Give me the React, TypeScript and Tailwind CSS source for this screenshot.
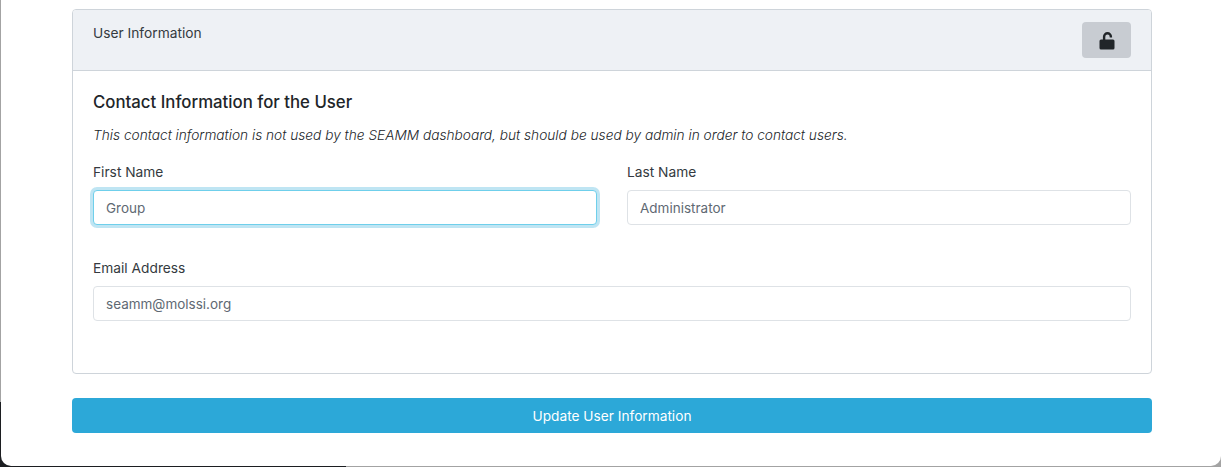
function Field({ label, value, focus, className }: { label: string; value: string; focus?: boolean; className?: string }) {
  return (
    <div className={className}>
      <label className="mb-[6px] block text-[13.75px] leading-[23px] text-[#343a40]">{label}</label>
      <input
        readOnly
        value={value}
        className={
          focus
            ? "block w-full h-[35px] rounded-[4px] border border-[#6fcfeb] bg-white px-3 text-[13.5px] leading-[21px] text-[#5f6973] outline-none shadow-[0_0_0_3px_rgba(44,168,216,0.3)]"
            : "block w-full h-[35px] rounded-[4px] border border-[#dee2e6] bg-white px-3 text-[13.5px] leading-[21px] text-[#5f6973] outline-none"
        }
      />
    </div>
  );
}

export default function App() {
  return (
    <div className="relative h-[467px] w-full overflow-hidden bg-[#a3a3a3] font-['Inter',sans-serif]">
      <div className="absolute bottom-0 left-0 h-[65px] w-[346px] bg-[#1c1e21]" />
      <div className="relative ml-px h-[466px] rounded-b-[10px] bg-white pl-[71px] pr-[69px] pt-[9px]">
        <div className="h-[365px] rounded-[4px] border border-[#ced4da]">
          <div className="flex h-[61px] justify-between rounded-t-[3px] border-b border-[#ced4da] bg-[#eef1f5] px-5 pt-3">
            <span className="pt-px text-[13.75px] leading-[21px] text-[#343a40]">User Information</span>
            <button className="flex h-[36px] w-[49px] items-center justify-center rounded-[4px] bg-[#c8ccd2]">
              <svg width="16" height="18" viewBox="0 0 16 18" className="mt-[1px]">
                <path d="M5.1 8V4.7a3.4 3.4 0 0 1 6.8 0V5.5" fill="none" stroke="#212529" strokeWidth="2.4" />
                <rect x="0.5" y="7.5" width="15" height="10" rx="1.5" fill="#212529" />
              </svg>
            </button>
          </div>
          <div className="px-5 pt-[21px]">
            <h5 className="mb-[13px] text-[16.8px] font-medium leading-[20px] text-[#212529]">Contact Information for the User</h5>
            <p className="mb-[15px] text-[13.7px] font-light italic leading-[21px] text-[#212529]">This contact information is not used by the SEAMM dashboard, but should be used by admin in order to contact users.</p>
            <div className="grid grid-cols-2 gap-[30px]">
              <Field label="First Name" value="Group" focus />
              <Field label="Last Name" value="Administrator" />
            </div>
            <Field className="mt-[32px]" label="Email Address" value="seamm@molssi.org" />
          </div>
        </div>
        <button className="mt-6 block h-[35px] w-full rounded-[4px] bg-[#2ca8d8] pt-px text-center text-[13.7px] text-white">Update User Information</button>
      </div>
    </div>
  );
}
